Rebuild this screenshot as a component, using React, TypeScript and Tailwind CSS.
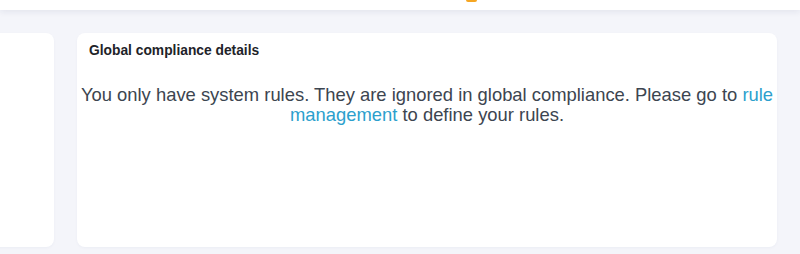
export default function App() {
  return (
    <div className="w-[800px] h-[254px] overflow-hidden bg-[#f4f5fa] relative" style={{ fontFamily: '"Liberation Sans", Arial, sans-serif' }}>
      <div className="h-[10px] bg-white shadow-[0_2px_6px_rgba(30,40,90,0.08)] relative z-10 flex justify-center">
        <div className="ml-[143px] w-[11px] h-[2px] bg-[#f5a623] rounded-b-sm" />
      </div>
      <div className="flex gap-[23px] pt-[23px] ml-[-200px]">
        <div className="w-[254px] h-[214px] bg-white rounded-lg shadow-[0_1px_3px_rgba(30,40,90,0.04)]" />
        <div className="w-[700px] h-[214px] bg-white rounded-lg shadow-[0_1px_3px_rgba(30,40,90,0.04)] flex flex-col">
          <div className="px-3 pt-[9px] text-[13.8px] font-bold text-[#1e2329] leading-[18px]">Global compliance details</div>
          <div className="mt-[25px] px-[2px] text-center text-[18.4px] leading-[20px] text-[#3c4550]">
            You only have system rules. They are ignored in global compliance. Please go to{" "}
            <a className="text-[#2c9fcd]" href="#">rule management</a> to define your rules.
          </div>
        </div>
      </div>
    </div>
  );
}
